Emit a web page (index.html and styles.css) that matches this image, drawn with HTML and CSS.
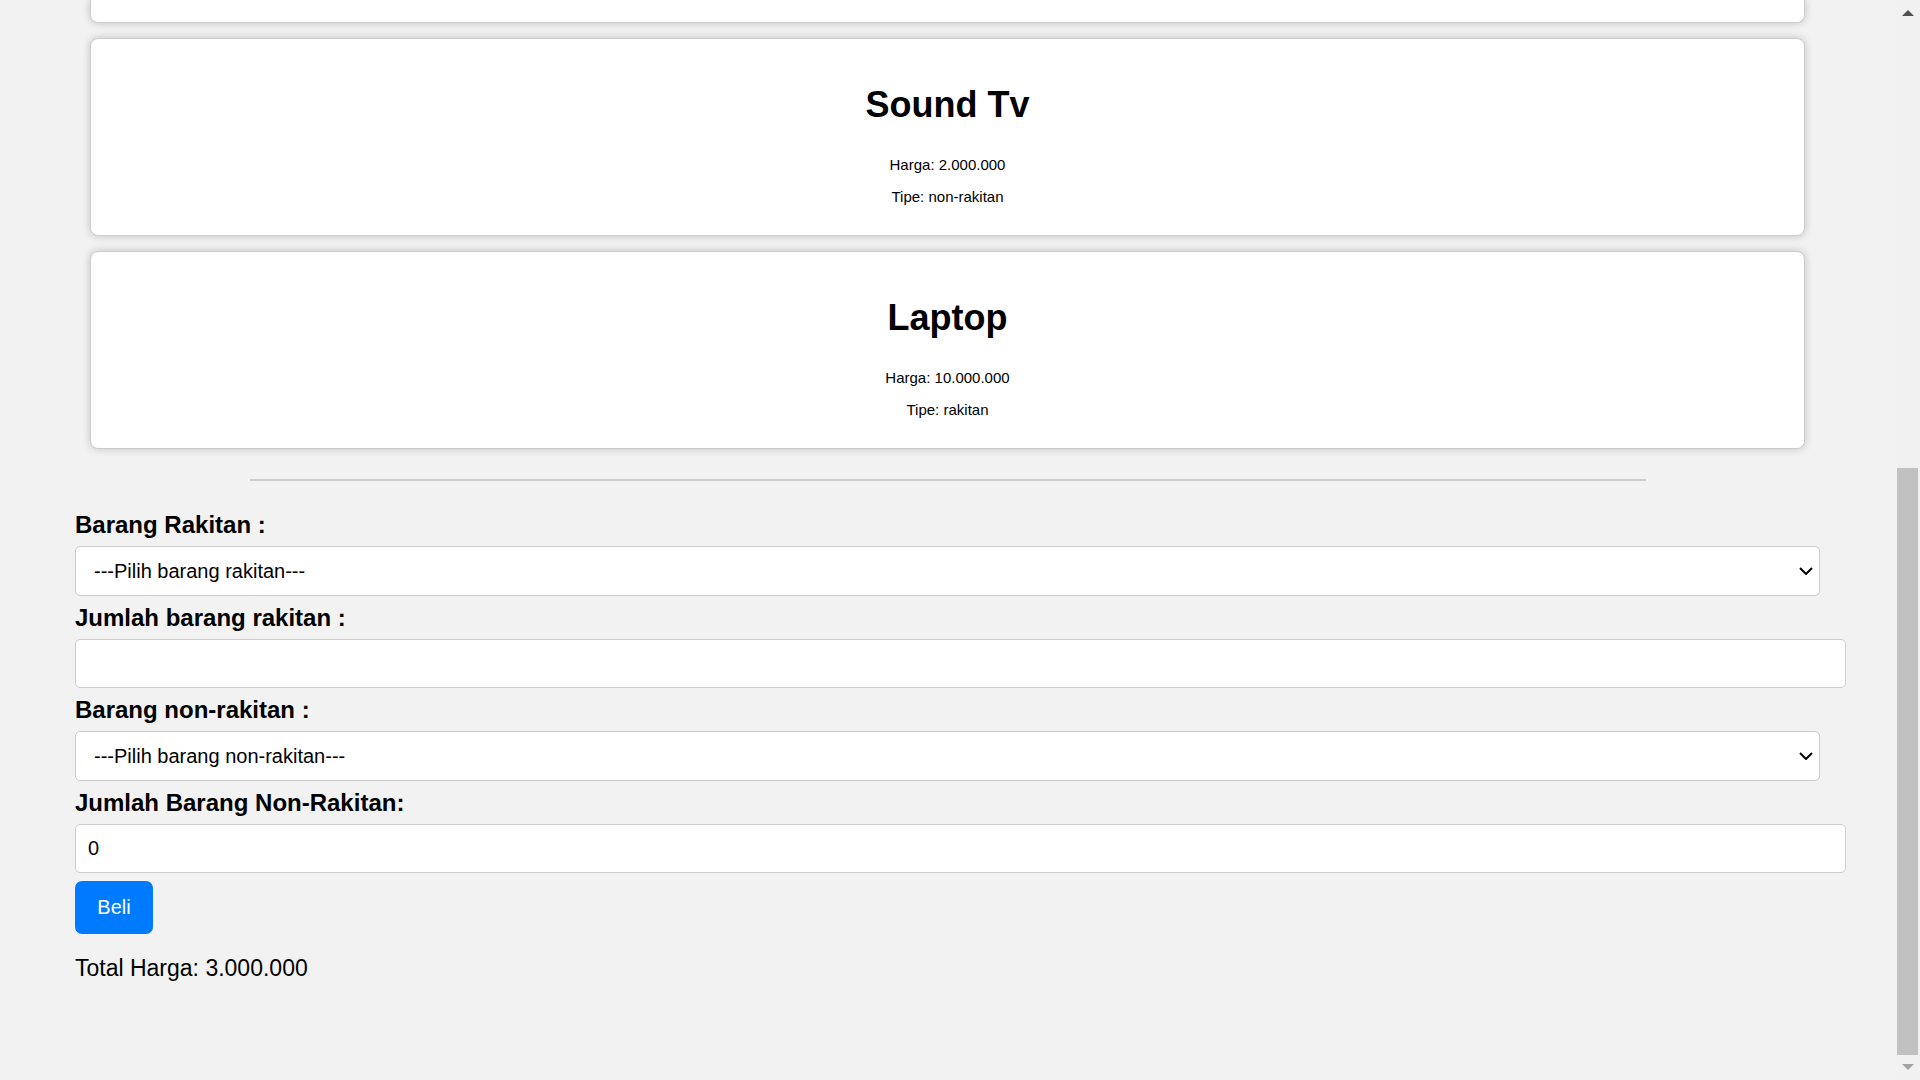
FILE: index.html
```html
<!DOCTYPE html>
<html lang="id">
<head>
  <meta charset="utf-8">
  <title>Toko Barang</title>
  <link rel="stylesheet" href="styles.css">
</head>
<body>
  <main class="page">
    <section class="cards">
      <article class="card card-cut"></article>
      <article class="card">
        <h2>Sound Tv</h2>
        <p>Harga: 2.000.000</p>
        <p>Tipe: non-rakitan</p>
      </article>
      <article class="card">
        <h2>Laptop</h2>
        <p>Harga: 10.000.000</p>
        <p>Tipe: rakitan</p>
      </article>
    </section>
    <hr class="divider">
    <form class="order">
      <label for="rakitan">Barang Rakitan :</label>
      <div class="select">
        <select id="rakitan"><option>---Pilih barang rakitan---</option></select>
        <svg class="chevron" viewBox="0 0 14 8" aria-hidden="true"><path d="M1 1l6 6 6-6"/></svg>
      </div>
      <label for="jumlah-rakitan">Jumlah barang rakitan :</label>
      <input id="jumlah-rakitan" type="number">
      <label for="non-rakitan">Barang non-rakitan :</label>
      <div class="select">
        <select id="non-rakitan"><option>---Pilih barang non-rakitan---</option></select>
        <svg class="chevron" viewBox="0 0 14 8" aria-hidden="true"><path d="M1 1l6 6 6-6"/></svg>
      </div>
      <label for="jumlah-non-rakitan">Jumlah Barang Non-Rakitan:</label>
      <input id="jumlah-non-rakitan" type="number" value="0">
      <button type="button">Beli</button>
    </form>
    <p class="total">Total Harga: 3.000.000</p>
  </main>
  <div class="scrollbar" aria-hidden="true">
    <svg class="arrow" viewBox="0 0 12 6"><path d="M0 6l6-6 6 6z" fill="#505050"/></svg>
    <div class="track"><div class="thumb"></div></div>
    <svg class="arrow" viewBox="0 0 12 6"><path d="M0 0l6 6 6-6z" fill="#a3a3a3"/></svg>
  </div>
</body>
</html>
```
FILE: styles.css
```css
body {
  margin: 0;
  min-height: 100vh;
  display: flex;
  background: #f2f2f2;
  color: #000;
  font-family: Arial, "Liberation Sans", sans-serif;
}

.page {
  flex: 1;
  min-width: 0;
  padding: 0 77px 0 75px;
}

.cards {
  display: flex;
  flex-direction: column;
  gap: 15px;
  margin: 0 15px;
}

.card {
  padding: 15px;
  border: 1px solid #ccc;
  border-radius: 8px;
  background: #fff;
  box-shadow: 0 0 9px rgba(0, 0, 0, 0.2);
  text-align: center;
}

.card-cut {
  padding: 11px;
  border-top: 0;
  border-radius: 0 0 8px 8px;
}

.card h2 {
  margin: 30px 0;
  font-size: 36px;
  line-height: 42px;
}

.card p {
  margin: 15px 0;
  font-size: 15px;
  line-height: 17px;
}

.divider {
  width: 80%;
  height: 2px;
  margin: 30px auto;
  border: 0;
  background: #ccc;
}

.order label {
  display: block;
  margin-bottom: 7px;
  font-size: 24px;
  font-weight: bold;
  line-height: 28px;
}

.order input,
.order select {
  display: block;
  width: 100%;
  margin: 0;
  border: 1px solid #ccc;
  border-radius: 5px;
  background: #fff;
  color: #000;
  font-family: inherit;
  font-size: 20px;
}

.order input {
  box-sizing: content-box;
  height: 23px;
  margin-bottom: 8px;
  padding: 12px;
  appearance: textfield;
}

.select {
  position: relative;
  margin-bottom: 8px;
}

.order select {
  box-sizing: border-box;
  height: 50px;
  padding: 0 18px;
  appearance: none;
}

.chevron {
  position: absolute;
  top: 21px;
  right: 7px;
  width: 14px;
  height: 8px;
  fill: none;
  stroke: #000;
  stroke-width: 2;
}

.order button {
  display: block;
  padding: 15px 22px;
  min-width: 78px;
  border: 0;
  border-radius: 7px;
  background: #007bff;
  color: #fff;
  font-family: inherit;
  font-size: 20px;
  line-height: 23px;
}

.total {
  margin: 21px 0;
  font-size: 23px;
  line-height: 26px;
}

.scrollbar {
  width: 21px;
  display: flex;
  flex-direction: column;
  align-items: center;
  padding: 10px 2px 10px 0;
  background: #f1f1f1;
}

.arrow {
  width: 12px;
  height: 6px;
}

.track {
  flex: 1;
  align-self: stretch;
  display: flex;
  flex-direction: column;
  justify-content: flex-end;
  padding: 9px 0;
}

.thumb {
  height: 57%;
  background: #c1c1c1;
}
```
